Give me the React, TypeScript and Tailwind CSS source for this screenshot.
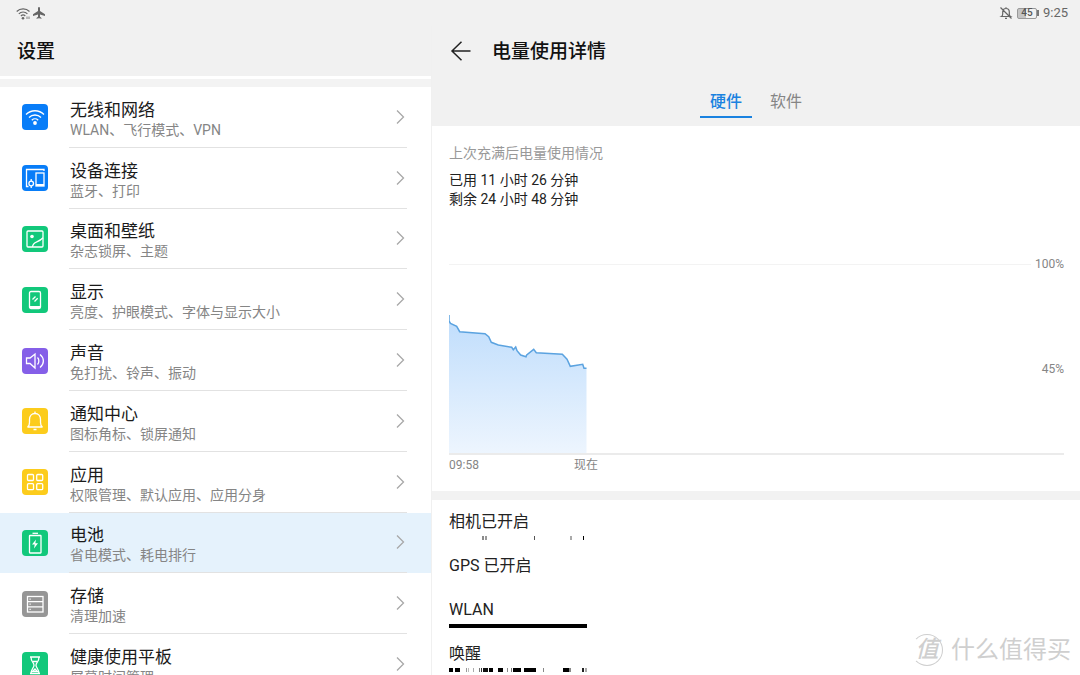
import { useState } from "react";
import type { ReactNode } from "react";
import clsx from "clsx";

type Item = {
  title: string;
  desc: string;
  color: string;
  icon: ReactNode;
};

const items: Item[] = [
  {
    title: "无线和网络",
    desc: "WLAN、飞行模式、VPN",
    color: "bg-[#087df8]",
    icon: (
      <>
        <path d="M4 10.5a12.7 12.7 0 0 1 18 0M7 13.5a8.5 8.5 0 0 1 12 0M9.8 16.2a4.6 4.6 0 0 1 6.4 0" />
        <circle cx="13" cy="19" r="1.9" fill="currentColor" stroke="none" />
      </>
    ),
  },
  {
    title: "设备连接",
    desc: "蓝牙、打印",
    color: "bg-[#087df8]",
    icon: (
      <>
        <path d="M6.5 21.5H4.5v-17H22V6" />
        <rect x="14" y="8" width="8" height="13" />
        <path d="M14 20h8" strokeWidth="2" />
        <circle cx="9.2" cy="18.5" r="2.3" />
        <path d="M9.2 14v2.2M9.2 20.8V23" />
      </>
    ),
  },
  {
    title: "桌面和壁纸",
    desc: "杂志锁屏、主题",
    color: "bg-[#12c87b]",
    icon: (
      <>
        <rect x="5" y="5" width="16" height="16" rx="1" />
        <circle cx="10" cy="10.5" r="1.8" fill="currentColor" stroke="none" />
        <path d="M10.5 21c.3-3 1.6-4.200 4.300-5.200 2.700-1 4.200-1.800 6.200-4" />
      </>
    ),
  },
  {
    title: "显示",
    desc: "亮度、护眼模式、字体与显示大小",
    color: "bg-[#12c87b]",
    icon: (
      <>
        <rect x="7.500" y="4.500" width="11" height="17" rx="1.500" />
        <path d="M8 20h10" strokeWidth="2" />
        <path d="M10.500 12.500l3-3M12.500 14.500l3.200-3.200" />
      </>
    ),
  },
  {
    title: "声音",
    desc: "免打扰、铃声、振动",
    color: "bg-[#855fe8]",
    icon: (
      <>
        <path d="M4.500 10v5.500H8l5 4.500V6L8 10z" />
        <path d="M15.500 9.500c1.800 1.800 1.800 5 0 7M18 6.500c4.500 3.500 4.500 9.500 0 13" />
      </>
    ),
  },
  {
    title: "通知中心",
    desc: "图标角标、锁屏通知",
    color: "bg-[#fccc1c]",
    icon: (
      <>
        <path d="M5.500 19c1.500-.8 2-2.500 2-4.500v-3c0-3.500 2.200-6 5.500-6s5.500 2.500 5.500 6v3c0 2 .5 3.700 2 4.500z" />
        <path d="M13 3.500v2M11.500 21.500h3" />
      </>
    ),
  },
  {
    title: "应用",
    desc: "权限管理、默认应用、应用分身",
    color: "bg-[#fccc1c]",
    icon: (
      <>
        <rect x="5.500" y="5.500" width="6" height="6" rx="1" />
        <rect x="14.700" y="5.500" width="6" height="6" rx="1" />
        <rect x="5.500" y="14.700" width="6" height="6" rx="1" />
        <rect x="14.700" y="14.700" width="6" height="6" rx="1" />
      </>
    ),
  },
  {
    title: "电池",
    desc: "省电模式、耗电排行",
    color: "bg-[#12c87b]",
    icon: (
      <>
        <rect x="7.500" y="5.500" width="11.500" height="17.500" rx="0.500" />
        <path d="M10.500 3.300h5.500" />
        <path
          d="M14 9.500l-4 5h2.700l-.7 4 4-5.200h-2.700z"
          fill="currentColor"
          stroke="none"
        />
      </>
    ),
  },
  {
    title: "存储",
    desc: "清理加速",
    color: "bg-[#969696]",
    icon: (
      <>
        <rect x="5.500" y="5.500" width="15.500" height="15.500" />
        <path d="M5.500 10.700h15.500M5.500 15.800h15.500" />
        <path d="M7.500 8.200h1.200M7.500 13.200h1.200M7.500 18.400h1.200" />
      </>
    ),
  },
  {
    title: "健康使用平板",
    desc: "屏幕时间管理",
    color: "bg-[#12c87b]",
    icon: (
      <>
        <path d="M8 5h10M8 21.500h10" />
        <path d="M9 5c0 5 3 5.500 3 8.200S9 17 9 21.500M17 5c0 5-3 5.500-3 8.200s3 3.800 3 8.300" />
        <path d="M11 9.500h4M10.500 19.500L13 17l2.500 2.500z" />
      </>
    ),
  },
];

// [start, width, colour] in px along the 138px timeline
type Segment = [number, number, string];

const camera: Segment[] = [
  [33, 2, "#8a8a8a"],
  [36, 2, "#9a9a9a"],
  [85, 1, "#555"],
  [121, 2, "#aaa"],
  [134, 1, "#000"],
];

const awake: Segment[] = [
  [0, 4, "#000"],
  [6, 5, "#000"],
  [17, 1, "#999"],
  [19, 1, "#bbb"],
  [24, 1, "#aaa"],
  [30, 1, "#777"],
  [32, 1, "#333"],
  [34, 5, "#111"],
  [40, 4, "#000"],
  [49, 5, "#000"],
  [58, 1, "#888"],
  [62, 1, "#777"],
  [64, 8, "#000"],
  [75, 12, "#000"],
  [94, 1, "#888"],
  [114, 6, "#000"],
  [120, 2, "#888"],
  [133, 2, "#222"],
  [136, 2, "#aaa"],
];

const usage: { name: string; segments: Segment[] }[] = [
  { name: "相机已开启", segments: camera },
  { name: "GPS 已开启", segments: [] },
  { name: "WLAN", segments: [[0, 138, "#000"]] },
  { name: "唤醒", segments: awake },
];

const line =
  "M1 1V7L2.500 9.500L8.700 12.300L11.700 17.700L37 19.700L40.700 22.700L43.300 28.300L50.300 31L63.700 33.300L65.300 35.700L67.700 33L69 36.700L72.700 41L78 42.700L78.700 41L85.700 35.300L88.300 38.700L114.300 40.300L119 45.300L122.300 52.300L134.700 50.300L136 54.300H138.500";

function StatusBar() {
  return (
    <div className="flex h-[26px] items-center justify-between bg-[#f1f1f1] pl-4 pr-3 text-[#666]">
      <div className="flex items-center gap-0.5">
        <svg width="15" height="13" viewBox="0 0 15 13" fill="none" stroke="currentColor" strokeWidth="1.200">
          <path d="M.7 4.500a9 9 0 0 1 12.800 0M2.800 6.800a6 6 0 0 1 8.600 0M4.900 9a3.200 3.200 0 0 1 4.400 0" />
          <circle cx="7" cy="11.300" r="1.300" fill="currentColor" stroke="none" />
          <path d="M11 9.500v2.500M13 9.500v2.500" strokeWidth="0.800" />
        </svg>
        <svg width="12" height="12" viewBox="0 0 12 12" fill="currentColor">
          <path d="M6 0c.7 0 1 .7 1 1.500v2.500L12 7.300v1.700L7 7.500v2.300l1.500 1.100v.9L6 11.200l-2.500.6v-.9L5 9.800V7.500L0 9V7.300L5 4V1.500C5 .7 5.300 0 6 0z" />
        </svg>
      </div>
      <div className="flex items-center gap-1">
        <svg width="14" height="14" viewBox="0 0 14 14" fill="none" stroke="currentColor" strokeWidth="1.200">
          <path d="M2.500 10.500c1-.6 1.200-1.500 1.200-2.500V6c0-2 1.300-3.500 3.300-3.500s3.300 1.500 3.300 3.500v2c0 1 .2 1.900 1.200 2.500zM6 12.300h2M7 1.200v1.300M1.500 1.500l11 11" />
        </svg>
        <div className="flex items-center">
          <div className="flex h-[11px] w-5 items-center justify-center rounded-[2px] border border-[#999] bg-linear-to-r from-[#c4c4c4] from-45% to-[#f1f1f1] to-45% text-[10px] leading-none font-medium text-[#555]">
            45
          </div>
          <div className="h-[6px] w-0.5 bg-[#777]" />
        </div>
        <span className="text-[13px]">9:25</span>
      </div>
    </div>
  );
}

function Sidebar() {
  const [selected, setSelected] = useState("电池");

  return (
    <aside className="w-2/5 shrink-0 border-r border-[#f0f0f0]">
      <h1 className="flex h-[50px] items-center bg-[#f1f1f1] px-[17px] pt-0.5 text-[19px] font-medium text-[#111]">
        设置
      </h1>
      <div className="mt-[3px] h-2 bg-[#f3f3f3]" />
      <ul className="grid h-[608px] auto-rows-fr">
        {items.map((item) => (
          <li key={item.title}>
            <button
              type="button"
              onClick={() => setSelected(item.title)}
              className={clsx(
                "flex h-full w-full items-center gap-[21px] pl-[22px] pr-6 text-left",
                selected === item.title && "bg-[#e5f2fc]"
              )}
            >
              <span className={clsx("size-[26px] shrink-0 rounded-[4px] text-white", item.color)}>
                <svg viewBox="0 0 26 26" fill="none" stroke="currentColor" strokeWidth="1.300">
                  {item.icon}
                </svg>
              </span>
              <span className="flex h-full flex-1 items-center justify-between border-b border-[#e2e2e2] pl-px">
                <span className="flex flex-col pt-[5px]">
                  <span className="text-[17px] leading-[22px] text-[#1a1a1a]">{item.title}</span>
                  <span className="text-[14px] leading-[19px] text-[#858585]">{item.desc}</span>
                </span>
                <svg
                  width="12"
                  height="16"
                  viewBox="0 0 12 16"
                  fill="none"
                  stroke="#a8a8a8"
                  strokeWidth="1.300"
                >
                  <path d="M2 1.500L8.500 8L2 14.500" />
                </svg>
              </span>
            </button>
          </li>
        ))}
      </ul>
    </aside>
  );
}

function Chart() {
  return (
    <div className="mt-[47px]">
      <div className="grid border-b-2 border-[#ebebeb]">
        <div className="col-start-1 row-start-1 flex h-[197px] flex-col gap-[89px] text-[12px] leading-4 text-[#858585]">
          <div className="flex items-center gap-1">
            <div className="h-px flex-1 bg-[#f3f3f3]" />
            100%
          </div>
          <div className="text-right">45%</div>
        </div>
        <svg
          className="col-start-1 row-start-1 self-end"
          width="138"
          height="139"
          viewBox="1 0 138 139"
          fill="none"
        >
          <defs>
            <linearGradient id="level" x1="0" y1="0" x2="0" y2="1">
              <stop offset="0" stopColor="#bfddfc" />
              <stop offset="1" stopColor="#edf5fe" />
            </linearGradient>
          </defs>
          <path d={line + "V139H1z"} fill="url(#level)" />
          <path d={line} stroke="#5ba3e0" strokeWidth="1.500" />
        </svg>
      </div>
      <div className="flex w-[149px] justify-between pt-0.5 text-[12px] leading-4 text-[#858585]">
        <span>09:58</span>
        <span>现在</span>
      </div>
    </div>
  );
}

function Detail() {
  const [tab, setTab] = useState("硬件");

  return (
    <main className="min-w-0 flex-1">
      <header className="bg-[#f1f1f1] pb-2">
        <div className="flex h-[50px] items-center gap-5 pl-[18px]">
          <button type="button" aria-label="返回">
            <svg width="22" height="20" viewBox="0 0 22 20" fill="none" stroke="#222" strokeWidth="1.500">
              <path d="M20.500 10H2M11.500 .8L2 10L11.500 19.200" />
            </svg>
          </button>
          <h2 className="pt-0.5 text-[19px] font-medium text-[#111]">电量使用详情</h2>
        </div>
        <div className="mt-3 flex justify-center gap-2">
          {["硬件", "软件"].map((name) => (
            <button
              key={name}
              type="button"
              onClick={() => setTab(name)}
              className={clsx(
                "border-b-2 px-[10px] py-0.5 text-[16px] leading-6",
                tab === name
                  ? "border-[#1a82e0] font-medium text-[#1a82e0]"
                  : "border-transparent text-[#858585]"
              )}
            >
              {name}
            </button>
          ))}
        </div>
      </header>
      <section className="pt-[17px] pr-4 pb-[18px] pl-[17px]">
        <h3 className="text-[14px] leading-5 text-[#999]">上次充满后电量使用情况</h3>
        <p className="mt-2 text-[14px] leading-[19px] text-[#222]">
          已用 11 小时 26 分钟
          <br />
          剩余 24 小时 48 分钟
        </p>
        <Chart />
      </section>
      <div className="h-[9px] bg-[#f2f2f2]" />
      <ul className="px-[17px] pt-[10px]">
        {usage.map((row) => (
          <li key={row.name} className="flex h-11 flex-col gap-0.5 text-[16px] leading-6 text-[#222]">
            {row.name}
            <svg width="138" height="4" shapeRendering="crispEdges">
              {row.segments.map(([x, w, fill]) => (
                <rect key={x} x={x} width={w} height="4" fill={fill} />
              ))}
            </svg>
          </li>
        ))}
      </ul>
    </main>
  );
}

export default function App() {
  return (
    <div className="relative h-screen overflow-hidden bg-white font-[Roboto,'Noto_Sans_CJK_SC',sans-serif]">
      <StatusBar />
      <div className="flex">
        <Sidebar />
        <Detail />
      </div>
      <div className="pointer-events-none absolute right-[9px] bottom-[7px] flex items-center gap-2 text-[#cfcfcf]">
        <span className="flex size-8 items-center justify-center rounded-full border border-l-transparent border-[#cfcfcf] text-[23px] font-medium italic">
          值
        </span>
        <span className="text-[24px]">什么值得买</span>
      </div>
    </div>
  );
}
